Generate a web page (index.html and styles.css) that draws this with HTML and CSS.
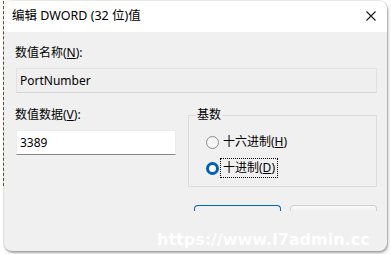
FILE: index.html
```html
<!DOCTYPE html>
<html lang="zh-CN">
<head>
<meta charset="utf-8">
<title>编辑 DWORD (32 位)值</title>
<link rel="stylesheet" href="styles.css">
</head>
<body>
<div class="stage">
  <div class="window">
    <div class="titlebar">
      <span class="title">编辑 DWORD (32 位)值</span>
      <svg class="close" width="10" height="10" viewBox="0 0 10 10"><path d="M0.5 0.5L9.5 9.5M9.5 0.5L0.5 9.5" stroke="#1a1a1a" stroke-width="1.1" fill="none"/></svg>
    </div>
    <div class="content">
      <div class="label">数值名称(<u>N</u>):</div>
      <div class="field readonly">PortNumber</div>
      <div class="row">
        <div class="col">
          <div class="label">数值数据(<u>V</u>):</div>
          <div class="field editable">3389</div>
        </div>
        <fieldset class="group">
          <legend>基数</legend>
          <div class="radio"><span class="dot"></span><span class="rlabel">十六进制(<u>H</u>)</span></div>
          <div class="radio"><span class="dot checked"></span><span class="rlabel focus">十进制(<u>D</u>)</span></div>
        </fieldset>
      </div>
      <div class="buttons">
        <div class="btn primary"></div>
        <div class="btn"></div>
      </div>
    </div>
  </div>
  <div class="watermark">https://www.l7admin.cc</div>
</div>
</body>
</html>
```

FILE: styles.css
```css
html, body {
  margin: 0;
  padding: 0;
  background: #ffffff;
  width: 391px;
  height: 254px;
  overflow: hidden;
}
.stage {
  position: relative;
  width: 391px;
  height: 254px;
  font-family: "Noto Sans", "Noto Sans CJK SC", sans-serif;
  font-size: 12px;
  color: #000;
}
.stage::before {
  content: "";
  position: absolute;
  left: 3px;
  top: 0;
  height: 185px;
  border-left: 1px dashed #7a5230;
}
.window {
  position: relative;
  margin-left: 4px;
  margin-top: 1px;
  width: 383px;
  height: 250px;
  background: #f0f0f0;
  border-radius: 8px;
  box-shadow: 1px 2px 3px rgba(0,0,0,0.35), 0 0 0 1px rgba(0,0,0,0.08);
  overflow: hidden;
}
.titlebar {
  height: 31px;
  background: #ffffff;
  display: flex;
  align-items: center;
  justify-content: space-between;
  padding: 0 10px 0 8px;
}
.title {
  font-size: 12.5px;
  line-height: 16px;
  padding-bottom: 1px;
}
.close {
  display: block;
  margin-right: 1px;
  margin-bottom: 1px;
}
.content {
  padding: 13px 10px 0 12px;
}
.label {
  line-height: 16px;
  height: 16px;
  margin-left: -1px;
}
.field {
  box-sizing: border-box;
  height: 25px;
  line-height: 23px;
  padding-left: 3px;
  margin-top: 7px;
}
.readonly {
  width: 361px;
  background: #efefef;
  border: 1px solid #e2e2e2;
  border-bottom-color: #d4d4d4;
  margin-bottom: 14px;
}
.editable {
  width: 160px;
  background: #ffffff;
  border: 1px solid #ececec;
  border-bottom: 1px solid #868686;
}
.row {
  display: flex;
  gap: 12px;
}
.col {
  width: 160px;
}
.group {
  margin: 0;
  width: 190px;
  box-sizing: border-box;
  border: 1px solid #dcdcdc;
  padding: 9px 0 8px 0;
}
.group legend {
  padding: 0 1px;
  margin-left: 7px;
  line-height: 16px;
}
.radio {
  display: flex;
  align-items: center;
  height: 20px;
  margin-left: 17px;
}
.radio + .radio {
  margin-top: 6px;
}
.dot {
  box-sizing: border-box;
  width: 13px;
  height: 13px;
  border-radius: 50%;
  border: 1px solid #8a8a8a;
  background: #f6f6f6;
  margin-right: 3px;
}
.dot.checked {
  border: 3.5px solid #005fb8;
  background: #ffffff;
}
.rlabel {
  line-height: 16px;
  padding: 0 1px;
}
.focus {
  outline: 1px dotted #000;
  outline-offset: 1px;
}
.buttons {
  display: flex;
  justify-content: flex-end;
  gap: 9px;
  margin-top: 18px;
}
.btn {
  box-sizing: border-box;
  width: 87px;
  height: 6px;
  border: 1px solid #d0d0d0;
  border-bottom: none;
  border-radius: 4px 4px 0 0;
  background: linear-gradient(#fbfbfb, #f0f0f0);
}
.btn.primary {
  border-color: #0067c0;
  background: #f0f0f0;
}
.watermark {
  position: absolute;
  left: 157px;
  top: 229px;
  font-family: "DejaVu Sans", sans-serif;
  font-weight: bold;
  font-size: 16px;
  line-height: 20px;
  letter-spacing: 0;
  color: rgba(255,255,255,0.95);
  white-space: nowrap;
}
```
